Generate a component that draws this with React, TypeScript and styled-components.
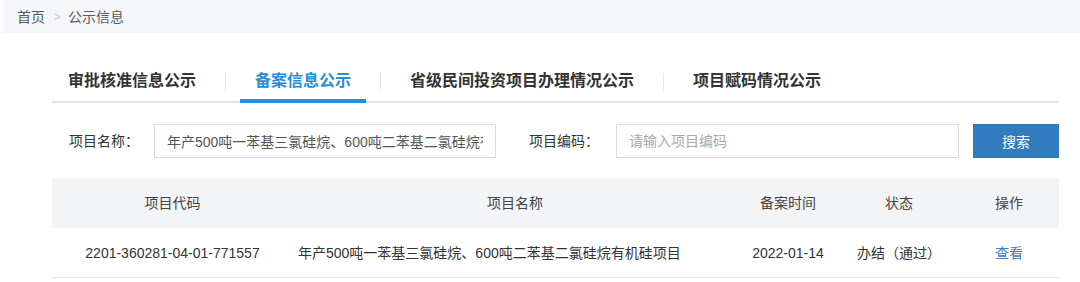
import React from "react";
import styled, { createGlobalStyle } from "styled-components";

const GlobalStyle = createGlobalStyle`
  html, body { margin: 0; padding: 0; background: #ffffff; }
  body {
    font-family: "Liberation Sans", "Noto Sans CJK SC", sans-serif;
    color: #333333;
    font-size: 14px;
  }
  * { box-sizing: border-box; }
`;

const Breadcrumb = styled.nav`
  height: 33px;
  margin-left: 3px;
  background: #f5f7fa;
  display: flex;
  align-items: center;
  padding-left: 14px;
  padding-top: 1px;
  font-size: 14px;
  color: #5a5a5a;
`;

const Crumb = styled.span`
  line-height: 20px;
`;

const CrumbSep = styled.span`
  color: #c2c2c2;
  font-size: 12px;
  margin: 0 7px 0 9px;
`;

const Main = styled.main`
  padding: 0 21px 0 52px;
`;

const TabBar = styled.div`
  margin-top: 25px;
  display: flex;
  border-bottom: 2px solid #e3e3e3;
`;

const Tab = styled.div<{ $active?: boolean; $first?: boolean }>`
  height: 45px;
  margin-bottom: -2px;
  padding: 5px 15px 0 ${(p) => (p.$first ? "16px" : "15px")};
  display: flex;
  align-items: center;
  font-size: 16px;
  font-weight: 700;
  line-height: 20px;
  color: ${(p) => (p.$active ? "#2d8cd6" : "#333333")};
  border-bottom: 4px solid ${(p) => (p.$active ? "#2d8cd6" : "transparent")};
`;

const TabSep = styled.span`
  align-self: center;
  margin: 4px 14px 0 14px;
  width: 1px;
  height: 18px;
  background: #e6e6e6;
`;

const SearchRow = styled.div`
  margin-top: 21px;
  display: flex;
  align-items: center;
  padding-left: 17px;
`;

const Label = styled.label<{ $w: number; $ml?: number }>`
  width: ${(p) => p.$w}px;
  margin-left: ${(p) => p.$ml ?? 0}px;
  flex: none;
  font-size: 14px;
  color: #333333;
  line-height: 20px;
`;

const Input = styled.input<{ $w: number }>`
  width: ${(p) => p.$w}px;
  height: 34px;
  flex: none;
  border: 1px solid #dcdcdc;
  border-radius: 0;
  padding: 0 12px;
  font-family: "Liberation Sans", "Noto Sans CJK SC", sans-serif;
  font-size: 14px;
  color: #555555;
  background: #ffffff;
  outline: none;
  &::placeholder { color: #a9a9a9; }
`;

const SearchButton = styled.button`
  margin-left: 14px;
  width: 86px;
  height: 34px;
  flex: none;
  border: none;
  background: #2f7bbe;
  color: #ffffff;
  font-family: "Liberation Sans", "Noto Sans CJK SC", sans-serif;
  font-size: 14px;
  cursor: pointer;
`;

const Table = styled.div`
  margin-top: 20px;
`;

const cols = "241px 444px 102px 120px 1fr";

const HeadRow = styled.div`
  display: grid;
  grid-template-columns: ${cols};
  height: 50px;
  background: #f3f4f6;
  align-items: center;
  padding-bottom: 1px;
`;

const BodyRow = styled.div`
  display: grid;
  grid-template-columns: ${cols};
  height: 50px;
  align-items: center;
  border-bottom: 1px solid #e6e6e6;
`;

const Cell = styled.div<{ $align?: "left" | "center"; $link?: boolean }>`
  text-align: ${(p) => p.$align ?? "center"};
  padding-left: ${(p) => (p.$align === "left" ? "5px" : "0")};
  font-size: 14px;
  line-height: 20px;
  color: ${(p) => (p.$link ? "#3a80c4" : "#333333")};
  white-space: nowrap;
  cursor: ${(p) => (p.$link ? "pointer" : "default")};
`;

const HeadCell = styled(Cell)`
  color: #444444;
`;

const tabs = ["审批核准信息公示", "备案信息公示", "省级民间投资项目办理情况公示", "项目赋码情况公示"];

export default function App() {
  return (
    <>
      <GlobalStyle />
      <Breadcrumb>
        <Crumb>首页</Crumb>
        <CrumbSep>&gt;</CrumbSep>
        <Crumb>公示信息</Crumb>
      </Breadcrumb>
      <Main>
        <TabBar>
          {tabs.map((t, i) => (
            <React.Fragment key={t}>
              {i > 0 && <TabSep />}
              <Tab $first={i === 0} $active={i === 1}>
                {t}
              </Tab>
            </React.Fragment>
          ))}
        </TabBar>
        <SearchRow>
          <Label $w={85}>项目名称：</Label>
          <Input
            $w={342}
            readOnly
            defaultValue="年产500吨一苯基三氯硅烷、600吨二苯基二氯硅烷有机硅项目"
          />
          <Label $w={87} $ml={33}>项目编码：</Label>
          <Input $w={343} placeholder="请输入项目编码" />
          <SearchButton>搜索</SearchButton>
        </SearchRow>
        <Table>
          <HeadRow>
            <HeadCell>项目代码</HeadCell>
            <HeadCell>项目名称</HeadCell>
            <HeadCell>备案时间</HeadCell>
            <HeadCell>状态</HeadCell>
            <HeadCell>操作</HeadCell>
          </HeadRow>
          <BodyRow>
            <Cell>2201-360281-04-01-771557</Cell>
            <Cell $align="left">年产500吨一苯基三氯硅烷、600吨二苯基二氯硅烷有机硅项目</Cell>
            <Cell>2022-01-14</Cell>
            <Cell>办结（通过）</Cell>
            <Cell $link>查看</Cell>
          </BodyRow>
        </Table>
      </Main>
    </>
  );
}
